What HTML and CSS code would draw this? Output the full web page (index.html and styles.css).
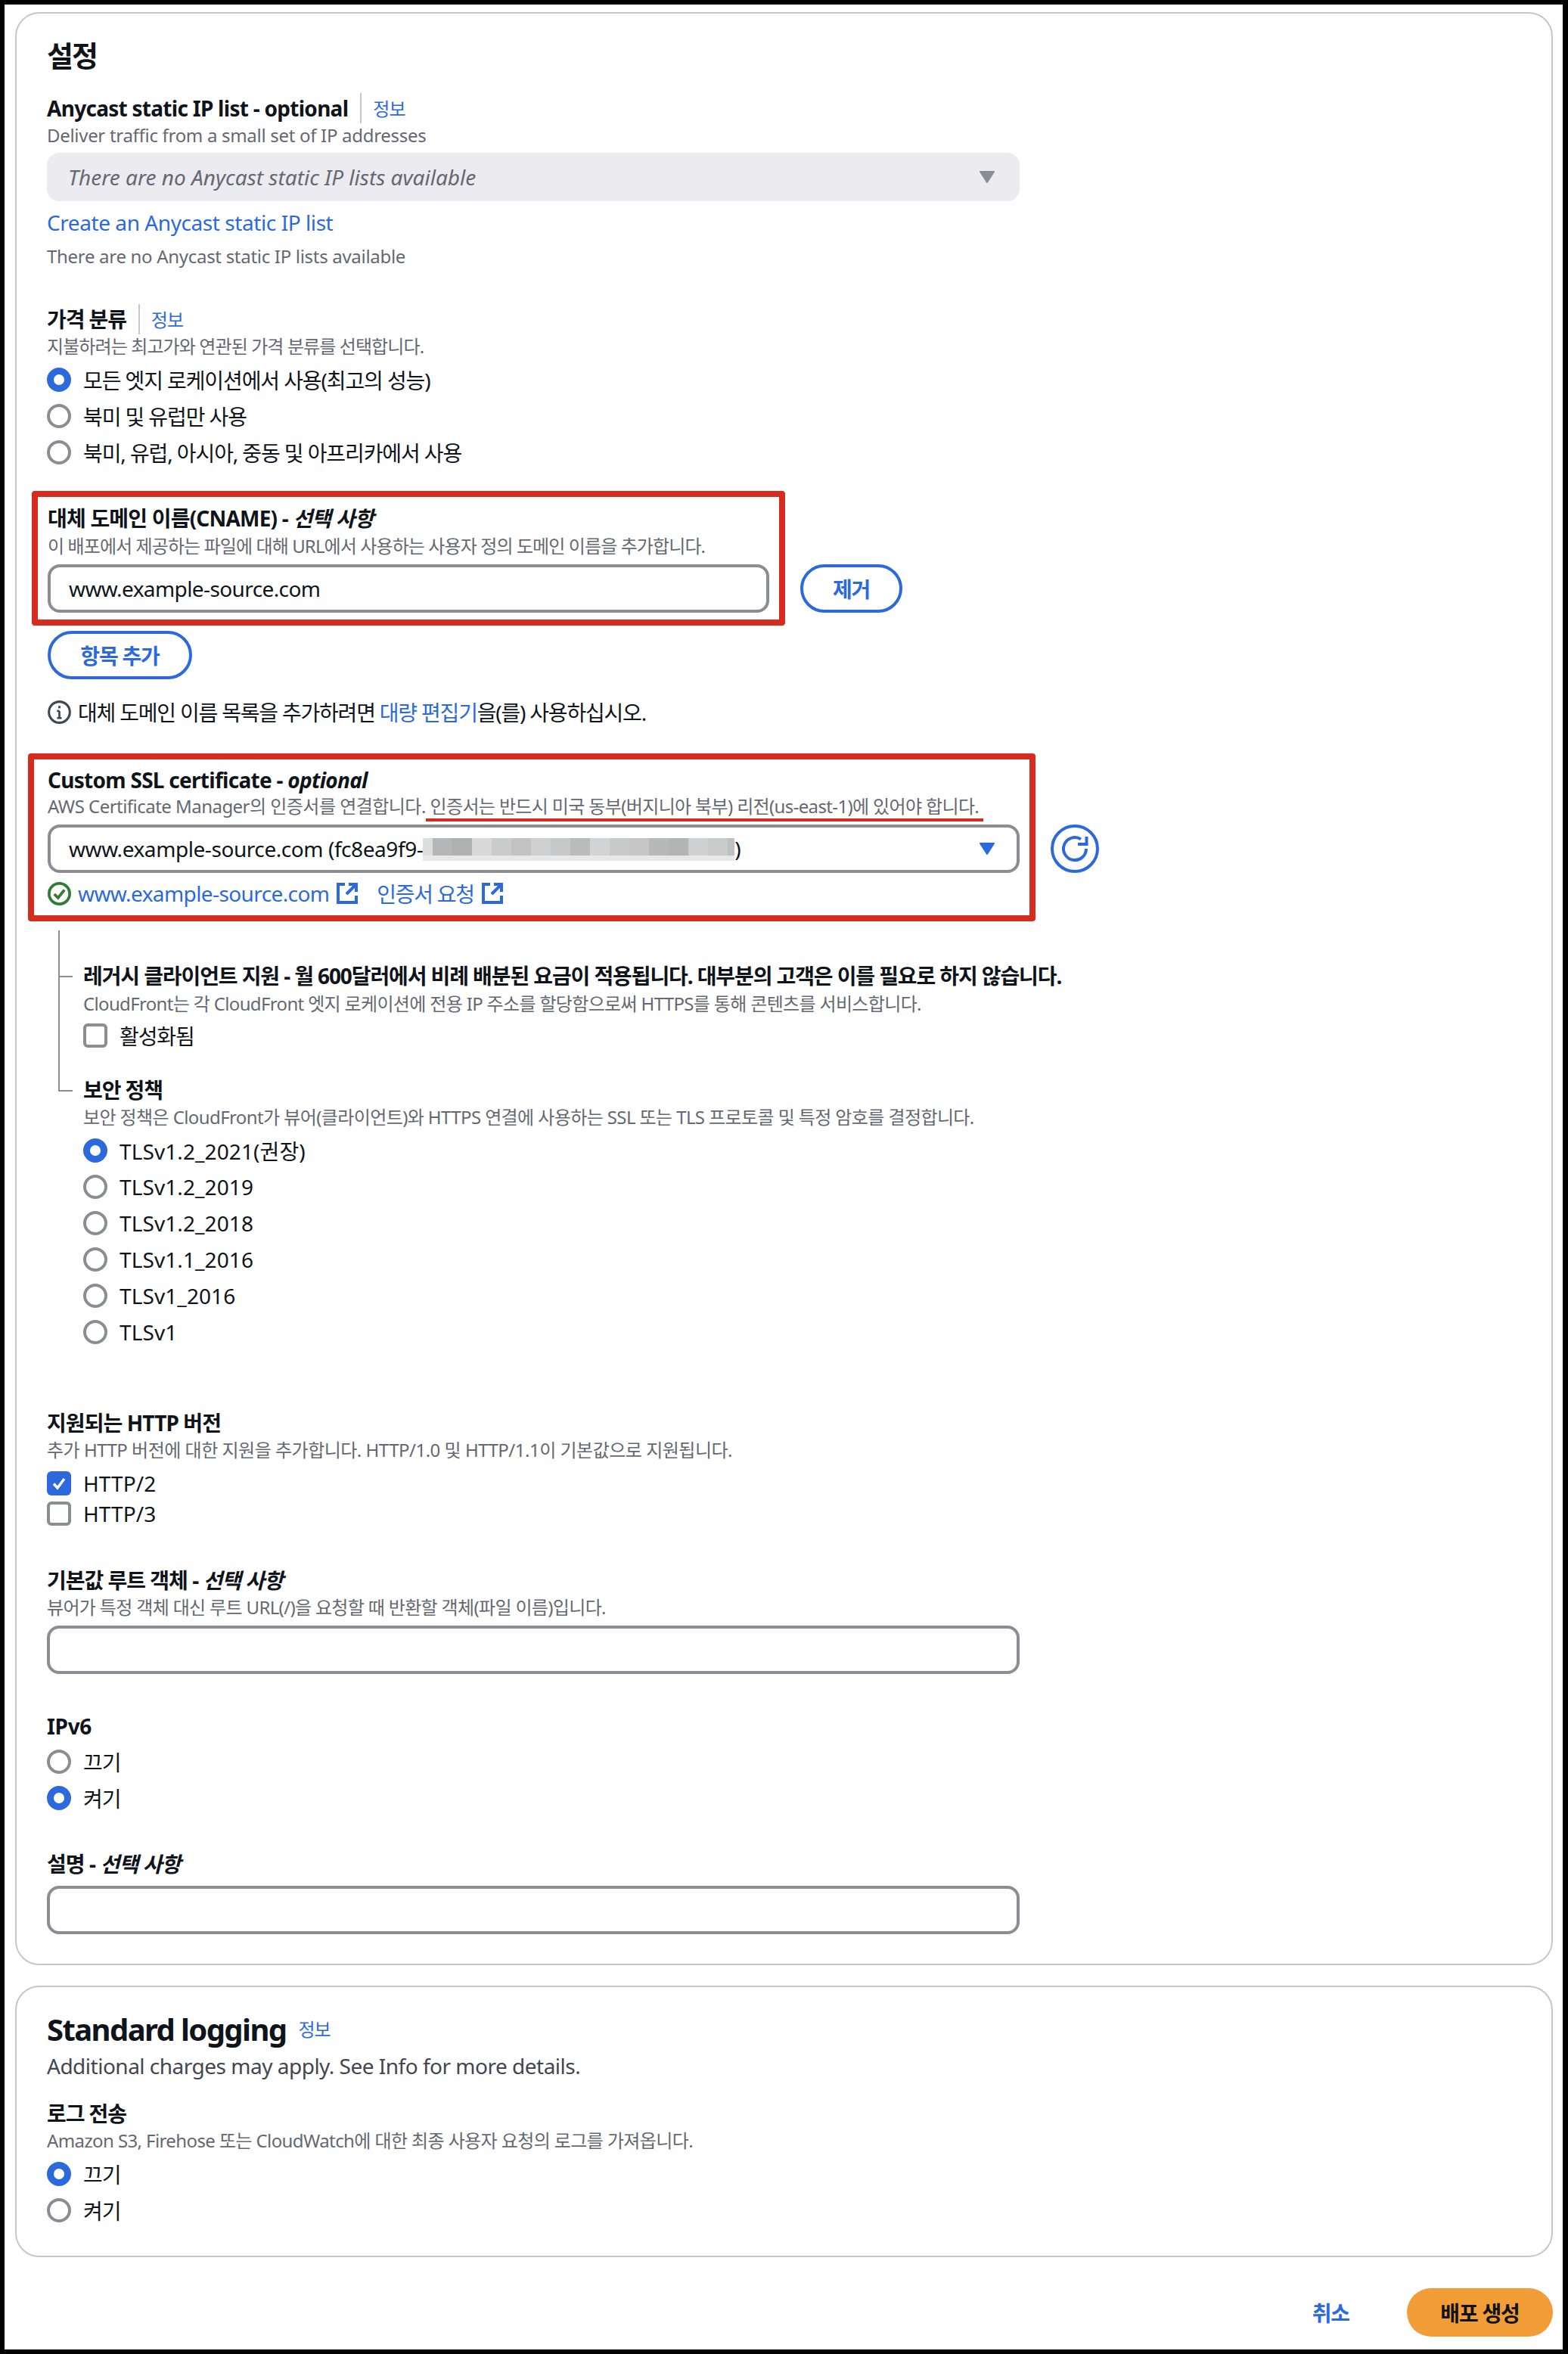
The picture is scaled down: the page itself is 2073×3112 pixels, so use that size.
FILE: index.html
```html
<!DOCTYPE html>
<html lang="ko">
<head>
<meta charset="utf-8">
<title>설정</title>
<link rel="stylesheet" href="styles.css">
</head>
<body>
<div class="frame">
  <section class="card card-main">
    <h2 class="card-title title-ko">설정</h2>

    <div class="label"><span class="ls-72">Anycast static IP list - optional</span><a class="info">정보</a></div>
    <div class="desc ls-30">Deliver traffic from a small set of IP addresses</div>
    <div class="select select-disabled mt7">
      <span>There are no Anycast static IP lists available</span>
      <svg class="caret" viewBox="0 0 20 16"><path d="M1 1h18L10 15z" fill="#8c8c94" stroke="#8c8c94" stroke-width="2" stroke-linejoin="round"/></svg>
    </div>
    <a class="link-line ls-43">Create an Anycast static IP list</a>
    <div class="desc mt9 ls-30">There are no Anycast static IP lists available</div>

    <div class="label mt47"><span>가격 분류</span><a class="info">정보</a></div>
    <div class="desc">지불하려는 최고가와 연관된 가격 분류를 선택합니다.</div>
    <div class="group mt4">
      <div class="opt"><i class="radio on"></i>모든 엣지 로케이션에서 사용(최고의 성능)</div>
      <div class="opt"><i class="radio"></i>북미 및 유럽만 사용</div>
      <div class="opt"><i class="radio"></i>북미, 유럽, 아시아, 중동 및 아프리카에서 사용</div>
    </div>

    <div class="row row-cname">
      <div class="redbox redbox-cname">
        <div class="label"><span class="ls-80">대체 도메인 이름(CNAME) - <em>선택 사항</em></span></div>
        <div class="desc desc-tight">이 배포에서 제공하는 파일에 대해 URL에서 사용하는 사용자 정의 도메인 이름을 추가합니다.</div>
        <div class="input mt8 ls-60">www.example-source.com</div>
      </div>
      <button class="btn btn-remove">제거</button>
    </div>
    <button class="btn btn-add">항목 추가</button>
    <div class="note">
      <svg class="note-icon" viewBox="0 0 30 30"><circle cx="15" cy="15" r="13.4" fill="none" stroke="#424650" stroke-width="3"/><path d="M15 13.5V22M12 22.5h6M12 13.5h3" fill="none" stroke="#424650" stroke-width="2.6"/><rect x="13.6" y="7" width="2.8" height="3" fill="#424650"/></svg>
      <span class="ls-120">대체 도메인 이름 목록을 추가하려면 <a class="link">대량 편집기</a>을(를) 사용하십시오.</span>
    </div>

    <div class="row row-ssl">
      <div class="redbox redbox-ssl">
        <div class="label"><span class="ls-72">Custom SSL certificate - <em>optional</em></span></div>
        <div class="desc desc-ssl ls-53">AWS Certificate Manager의 인증서를 연결합니다. <span class="redline">인증서는 반드시 미국 동부(버지니아 북부) 리전(us-east-1)에 있어야 합니다.</span></div>
        <div class="select select-ssl">
          <span class="cert ls-43">www.example-source.com (fc8ea9f9-<span class="mosaic"></span>)</span>
          <svg class="caret" viewBox="0 0 20 16"><path d="M1 1h18L10 15z" fill="#2c69dd" stroke="#2c69dd" stroke-width="2" stroke-linejoin="round"/></svg>
        </div>
        <div class="cert-links">
          <svg class="status-icon" viewBox="0 0 30 30"><circle cx="15" cy="15" r="13.2" fill="none" stroke="#2e7d32" stroke-width="3.6"/><path d="M8.5 15.5l4.8 4.8L21.5 10" fill="none" stroke="#2e7d32" stroke-width="3.6"/></svg>
          <a class="link ls-60">www.example-source.com</a>
          <svg class="ext" viewBox="0 0 28 28"><path d="M11 2H2v24h24v-9M16 2h10v10M26 2L13 15" fill="none" stroke="#2c69dd" stroke-width="4"/></svg>
          <a class="link link-request">인증서 요청</a>
          <svg class="ext" viewBox="0 0 28 28"><path d="M11 2H2v24h24v-9M16 2h10v10M26 2L13 15" fill="none" stroke="#2c69dd" stroke-width="4"/></svg>
        </div>
      </div>
      <button class="icon-btn" aria-label="새로 고침">
        <svg viewBox="0 0 64 64"><circle cx="32" cy="32" r="30" fill="none" stroke="#2c69dd" stroke-width="4"/><path d="M47 32A15 15 0 1 1 40 19.4M36 26h11.5V16" fill="none" stroke="#2c69dd" stroke-width="4"/></svg>
      </button>
    </div>

    <div class="tree">
      <div class="tree-branch first">
        <div class="label">레거시 클라이언트 지원 - 월 600달러에서 비례 배분된 요금이 적용됩니다. 대부분의 고객은 이를 필요로 하지 않습니다.</div>
        <div class="desc desc-tight ls-66">CloudFront는 각 CloudFront 엣지 로케이션에 전용 IP 주소를 할당함으로써 HTTPS를 통해 콘텐츠를 서비스합니다.</div>
        <div class="opt opt-cb mt6"><i class="check"></i>활성화됨</div>
      </div>
      <div class="tree-branch last">
        <div class="label">보안 정책</div>
        <div class="desc ls-60">보안 정책은 CloudFront가 뷰어(클라이언트)와 HTTPS 연결에 사용하는 SSL 또는 TLS 프로토콜 및 특정 암호를 결정합니다.</div>
        <div class="group mt4 tls-group">
          <div class="opt"><i class="radio on"></i>TLSv1.2_2021(권장)</div>
          <div class="opt"><i class="radio"></i>TLSv1.2_2019</div>
          <div class="opt"><i class="radio"></i>TLSv1.2_2018</div>
          <div class="opt"><i class="radio"></i>TLSv1.1_2016</div>
          <div class="opt"><i class="radio"></i>TLSv1_2016</div>
          <div class="opt"><i class="radio"></i>TLSv1</div>
        </div>
      </div>
    </div>

    <div class="label mt76 ls-90">지원되는 HTTP 버전</div>
    <div class="desc ls-50">추가 HTTP 버전에 대한 지원을 추가합니다. HTTP/1.0 및 HTTP/1.1이 기본값으로 지원됩니다.</div>
    <div class="group mt8 tls-group">
      <div class="opt opt-cb"><i class="check on"><svg viewBox="0 0 32 32"><path d="M9 16.5l5 5.5 9-12" fill="none" stroke="#fff" stroke-width="3.4"/></svg></i>HTTP/2</div>
      <div class="opt opt-cb"><i class="check"></i>HTTP/3</div>
    </div>

    <div class="label mt48"><span class="ls-100">기본값 루트 객체 - <em>선택 사항</em></span></div>
    <div class="desc ls-66">뷰어가 특정 객체 대신 루트 URL(/)을 요청할 때 반환할 객체(파일 이름)입니다.</div>
    <div class="input input-full mt8"></div>

    <div class="label mt49 ls-30">IPv6</div>
    <div class="group mt3">
      <div class="opt"><i class="radio"></i>끄기</div>
      <div class="opt"><i class="radio on"></i>켜기</div>
    </div>

    <div class="label mt43"><span class="ls-90">설명 - <em>선택 사항</em></span></div>
    <div class="input input-full mt9"></div>
  </section>

  <section class="card card-log">
    <div class="log-head"><h2 class="card-title title-en">Standard logging</h2><a class="info info-plain">정보</a></div>
    <div class="log-sub ls-50">Additional charges may apply. See Info for more details.</div>
    <div class="label mt23">로그 전송</div>
    <div class="desc ls-60">Amazon S3, Firehose 또는 CloudWatch에 대한 최종 사용자 요청의 로그를 가져옵니다.</div>
    <div class="group mt4">
      <div class="opt"><i class="radio on"></i>끄기</div>
      <div class="opt"><i class="radio"></i>켜기</div>
    </div>
  </section>

  <div class="actions">
    <a class="cancel">취소</a>
    <button class="btn-primary">배포 생성</button>
  </div>
</div>
</body>
</html>
```

FILE: styles.css
```css
* { box-sizing: border-box; }
html, body { margin: 0; padding: 0; background: #fff; }
body {
  font-family: "Noto Sans", "Noto Sans CJK KR", sans-serif;
  color: #0f141a;
  font-size: 28px;
  letter-spacing: -1.1px;
}
.frame {
  width: 2073px;
  height: 3112px;
  border: 6px solid #000;
  border-right-width: 7px;
  padding: 10px 13px 0 14px;
  background: #fff;
}
.card {
  border: 2px solid #c6c6cd;
  border-radius: 32px;
  background: #fff;
  padding-left: 40px;
  padding-right: 40px;
}
.card-main { height: 2582px; padding-top: 31px; }
.card-log { height: 359px; margin-top: 27px; padding-top: 32px; }
.card-title {
  margin: 0;
  font-size: 40px;
  line-height: 48px;
  font-weight: 700;
}
.title-ko { margin-bottom: 26px; font-size: 38px; letter-spacing: -2px; }
.title-en { letter-spacing: -1.6px; }
.label {
  display: flex;
  align-items: center;
  height: 40px;
  font-size: 28px;
  line-height: 40px;
  font-weight: 700;
  white-space: nowrap;
}
.label em { font-style: italic; }
.info {
  margin-left: 16px;
  padding-left: 15px;
  height: 40px;
  border-left: 2px solid #c6c6cd;
  color: #2c69dd;
  font-size: 24px;
  font-weight: 400;
  line-height: 42px;
  letter-spacing: -1px;
}
.info-plain { border: 0; padding: 0; margin-left: 16px; line-height: 48px; height: 48px; }
.desc {
  font-size: 24px;
  line-height: 32px;
  height: 32px;
  color: #656871;
  white-space: nowrap;
  letter-spacing: -0.9px;
}
.desc-tight { margin-top: 1px; }
.ls-30 { letter-spacing: -0.3px; }
.ls-43 { letter-spacing: -0.43px; }
.ls-50 { letter-spacing: -0.5px; }
.ls-53 { letter-spacing: -0.53px; }
.ls-60 { letter-spacing: -0.6px; }
.ls-66 { letter-spacing: -0.66px; }
.ls-72 { letter-spacing: -0.72px; }
.ls-80 { letter-spacing: -0.8px; }
.ls-90 { letter-spacing: -0.9px; }
.ls-100 { letter-spacing: -1px; }
.ls-120 { letter-spacing: -1.2px; }
.select, .input {
  display: flex;
  align-items: center;
  justify-content: space-between;
  height: 64px;
  border-radius: 16px;
  padding: 0 33px 0 28px;
  font-size: 28px;
  white-space: nowrap;
}
.select-disabled {
  width: 1286px;
  background: #ebebf0;
  color: #656871;
  font-style: italic;
  letter-spacing: 0;
}
.select-ssl, .input {
  border: 4px solid #8c8c94;
  background: #fff;
}
.input { padding: 0 24px; }
.input-full { width: 1286px; }
.select-ssl { width: 1285px; padding: 0 29px 0 24px; margin-top: 8px; }
.caret { width: 20px; height: 16px; flex: none; }
.link-line {
  display: block;
  margin-top: 8px;
  height: 40px;
  line-height: 40px;
  color: #2c69dd;
}
.link { color: #2c69dd; }
.group { display: flex; flex-direction: column; }
.opt {
  display: flex;
  align-items: center;
  gap: 16px;
  height: 48px;
  font-size: 28px;
  white-space: nowrap;
}
.opt-cb { height: 40px; }
.tls-group { letter-spacing: 0.1px; }
.radio {
  flex: none;
  width: 32px;
  height: 32px;
  border-radius: 50%;
  border: 4px solid #8c8c94;
  background: #fff;
}
.radio.on { border: 9px solid #2c69dd; }
.check {
  flex: none;
  display: block;
  width: 32px;
  height: 32px;
  border-radius: 6px;
  border: 4px solid #8c8c94;
  background: #fff;
}
.check.on { border: 0; background: #2c69dd; }
.check svg { display: block; width: 32px; height: 32px; }

.row { display: flex; gap: 20px; }
.row-cname { margin: 27px 0 0 -20px; align-items: flex-end; }
.redbox { border: 8px solid #d62b1f; border-radius: 4px; }
.redbox-cname { width: 996px; height: 178px; padding: 8px 13px 0; }
.btn {
  height: 64px;
  border: 4px solid #2c69dd;
  border-radius: 32px;
  background: #fff;
  color: #2c69dd;
  font: 700 28px "Noto Sans", "Noto Sans CJK KR", sans-serif;
  letter-spacing: -1.2px;
  padding: 0;
}
.btn-remove { width: 135px; margin-bottom: 17px; }
.btn-add { display: block; width: 191px; margin: 7px 0 0 1px; }
.note {
  display: flex;
  align-items: center;
  gap: 9px;
  height: 40px;
  margin: 23px 0 0 1px;
  font-size: 28px;
  white-space: nowrap;
}
.note-icon { width: 31px; height: 31px; flex: none; }

.row-ssl { margin: 35px 0 0 -25px; align-items: flex-start; }
.redbox-ssl { width: 1332px; height: 222px; padding: 7px 13px 0 18px; }
.desc-ssl { margin-top: -1px; }
.redline {
  display: inline-block;
  margin: 0 0 0 -6px;
  padding: 0 6px;
  height: 36px;
  border-bottom: 4px solid #d62b1f;
  vertical-align: top;
  letter-spacing: -0.64px;
}
.cert { display: flex; align-items: center; }
.mosaic {
  display: block;
  width: 412px;
  height: 30px;
  margin-top: 2px;
  background:
    linear-gradient(to right,
      #dcdedd 0 13px, #b5b6b7 13px 39px, #afb0b1 39px 65px, #d8d8d9 65px 91px,
      #cacbcd 91px 117px, #c2c2c3 117px 143px, #cfcfcf 143px 169px, #c6c7c8 169px 195px,
      #babbbd 195px 221px, #d2d3d5 221px 247px, #c8c9ca 247px 273px, #c6c6c6 273px 299px,
      #b7b8ba 299px 325px, #b3b5b4 325px 351px, #cfd0d2 351px 377px, #cacbcd 377px 403px,
      #bfc1c1 403px 412px) top / 100% 23px no-repeat,
    #e8e8e8;
}
.cert-links {
  display: flex;
  align-items: center;
  height: 40px;
  margin-top: 7px;
  font-size: 28px;
  white-space: nowrap;
}
.status-icon { width: 31px; height: 31px; flex: none; margin-right: 9px; }
.ext { width: 28px; height: 28px; flex: none; margin-left: 10px; }
.link-request { margin-left: 25px; letter-spacing: -1.3px; }
.icon-btn {
  width: 64px;
  height: 64px;
  margin-top: 94px;
  padding: 0;
  border: 0;
  background: none;
}
.icon-btn svg { display: block; width: 64px; height: 64px; }

.tree {
  position: relative;
  margin: 12px 0 0 15px;
  padding: 40px 0 0 33px;
}
.tree::before {
  content: "";
  position: absolute;
  left: 0;
  top: 0;
  width: 2px;
  height: 213px;
  background: #8c8c94;
}
.tree-branch { position: relative; }
.tree-branch::before {
  content: "";
  position: absolute;
  left: -33px;
  top: 20px;
  width: 19px;
  height: 2px;
  background: #8c8c94;
}
.tree-branch.last { margin-top: 32px; }
.mt3 { margin-top: 3px; }
.mt4 { margin-top: 4px; }
.mt6 { margin-top: 6px; }
.mt7 { margin-top: 7px; }
.mt8 { margin-top: 8px; }
.mt9 { margin-top: 9px; }
.mt23 { margin-top: 23px; }
.mt43 { margin-top: 43px; }
.mt47 { margin-top: 47px; }
.mt48 { margin-top: 48px; }
.mt49 { margin-top: 49px; }
.mt76 { margin-top: 76px; }

.log-head { display: flex; align-items: center; height: 48px; }
.log-sub { margin-top: 4px; height: 40px; line-height: 40px; color: #424650; font-size: 28px; }

.actions {
  display: flex;
  justify-content: flex-end;
  align-items: center;
  gap: 76px;
  margin-top: 41px;
}
.cancel { color: #2c69dd; font-weight: 700; font-size: 28px; }
.btn-primary {
  width: 193px;
  height: 64px;
  border: 0;
  border-radius: 32px;
  background: #f29d38;
  color: #0f141a;
  font: 700 28px "Noto Sans", "Noto Sans CJK KR", sans-serif;
  letter-spacing: -1.2px;
}
```
